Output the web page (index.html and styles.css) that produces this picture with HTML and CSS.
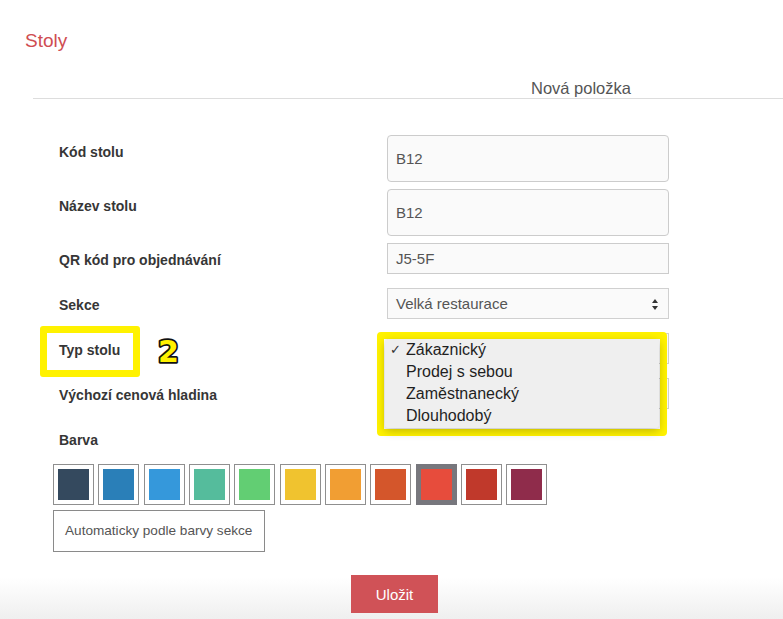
FILE: index.html
```html
<!DOCTYPE html>
<html lang="cs">
<head>
<meta charset="utf-8">
<title>Stoly</title>
<link rel="stylesheet" href="styles.css">
</head>
<body>
<div class="page">
  <header class="header"><h1 class="title">Stoly</h1></header>
  <div class="tabbar"><span class="tab">Nová položka</span></div>

  <form class="form">
    <div class="row">
      <div class="label">Kód stolu</div>
      <div class="field tall">B12</div>
    </div>
    <div class="row">
      <div class="label">Název stolu</div>
      <div class="field tall">B12</div>
    </div>
    <div class="row">
      <div class="label">QR kód pro objednávání</div>
      <div class="field">J5-5F</div>
    </div>
    <div class="row gap">
      <div class="label">Sekce</div>
      <div class="field select">Velká restaurace
        <svg class="arrows" width="6" height="11" viewBox="0 0 6 11"><path d="M3 0 L6 4 L0 4 Z M0 7 L6 7 L3 11 Z" fill="#333"/></svg>
      </div>
    </div>
    <div class="row gap">
      <div class="label">Typ stolu</div>
      <div class="field select"></div>
    </div>
    <div class="row gap">
      <div class="label">Výchozí cenová hladina</div>
      <div class="field select"></div>
    </div>
    <div class="row gap">
      <div class="label">Barva</div>
    </div>

    <div class="swatches">
      <span class="swatch"><span class="chip c1"></span></span>
      <span class="swatch"><span class="chip c2"></span></span>
      <span class="swatch"><span class="chip c3"></span></span>
      <span class="swatch"><span class="chip c4"></span></span>
      <span class="swatch"><span class="chip c5"></span></span>
      <span class="swatch"><span class="chip c6"></span></span>
      <span class="swatch"><span class="chip c7"></span></span>
      <span class="swatch"><span class="chip c8"></span></span>
      <span class="swatch selected"><span class="chip c9"></span></span>
      <span class="swatch"><span class="chip c10"></span></span>
      <span class="swatch"><span class="chip c11"></span></span>
    </div>
    <div class="auto">Automaticky podle barvy sekce</div>
  </form>

  <footer class="footer">
    <button class="save" type="button">Uložit</button>
  </footer>

  <div class="mark-label"></div>
  <svg class="mark-num" width="36" height="36" viewBox="0 0 36 36"><text x="5" y="28" class="num">2</text></svg>

  <div class="popup">
    <ul class="menu">
      <li class="opt"><span class="check">✓</span>Zákaznický</li>
      <li class="opt"><span class="check"></span>Prodej s sebou</li>
      <li class="opt"><span class="check"></span>Zaměstnanecký</li>
      <li class="opt"><span class="check"></span>Dlouhodobý</li>
    </ul>
  </div>
</div>
</body>
</html>
```

FILE: styles.css
```css
* { box-sizing: border-box; }
html, body { margin: 0; padding: 0; background: #fff; }
body { font-family: "Liberation Sans", Arial, sans-serif; }

.page { position: relative; width: 783px; height: 619px; overflow: hidden; }

.header { padding: 30px 0 0 25px; }
.title { margin: 0; font-size: 19px; line-height: 22px; font-weight: normal; color: #cf4d52; }

.tabbar { margin: 26px 0 0 33px; border-bottom: 1px solid #dddddd; }
.tab { display: block; margin-left: 498px; font-size: 16.5px; line-height: 20px; color: #555; }

.form { margin-top: 36px; padding-left: 59px; }
.row { display: flex; align-items: flex-start; margin-top: 7px; }
.row:first-child { margin-top: 0; }
.row.gap { margin-top: 14px; }
.label { width: 328px; padding-top: 7px; line-height: 20px; font-size: 14px; font-weight: bold; color: #363636; }

.field {
  position: relative;
  width: 282px; height: 31px;
  padding-left: 8px;
  border: 1px solid #cccccc;
  background: #fafafa;
  font-size: 15px; line-height: 29px; color: #555;
}
.field.tall { height: 47px; line-height: 45px; border-radius: 4px; }
.field.select { border-color: #d0d0d0; }
.arrows { position: absolute; right: 10px; top: 10px; }

.swatches { display: flex; gap: 4.33px; margin: 14px 0 0 -6px; }
.swatch { display: block; width: 41px; height: 41px; padding: 4px; border: 1px solid #8f8f8f; background: #fff; }
.swatch.selected { background: #77777d; border-color: #77777d; }
.chip { display: block; width: 31px; height: 31px; }
.c1 { background: #34495e; }
.c2 { background: #2a7fb8; }
.c3 { background: #3598db; }
.c4 { background: #55bc9c; }
.c5 { background: #62ce73; }
.c6 { background: #f0c32f; }
.c7 { background: #f19e33; }
.c8 { background: #d4562b; }
.c9 { background: #e74c3c; }
.c10 { background: #c0392b; }
.c11 { background: #8f2c4b; }

.auto {
  width: 212px; height: 42px; margin: 5px 0 0 -6px;
  padding-left: 11px;
  border: 1px solid #8a8a8a;
  font-size: 13.6px; line-height: 40px; color: #555;
  white-space: nowrap;
}

.footer {
  margin-top: 8px; height: 59px; padding-top: 15px;
  background: linear-gradient(to bottom, #ffffff 0%, #ffffff 30%, #efefef 100%);
}
.save {
  display: block; margin-left: 351px;
  width: 87px; height: 38px;
  border: 0; background: #d05257; color: #fff;
  font-family: "Liberation Sans", Arial, sans-serif; font-size: 15px;
}

.mark-label {
  position: absolute; left: 40px; top: 326px;
  width: 100px; height: 51px;
  border: 7px solid #fff200; border-radius: 3px;
}
.mark-num { position: absolute; left: 153px; top: 334px; }
.num {
  font-family: "DejaVu Sans", sans-serif; font-weight: bold; font-size: 30px;
  fill: #fff200; stroke: #111; stroke-width: 3.5px; paint-order: stroke fill;
  stroke-linejoin: round;
}

.popup {
  position: absolute; left: 377px; top: 332px;
  width: 290px; height: 104px;
  border: 7px solid #fff200; border-radius: 4px;
  padding: 0 1px 0 1px;
}
.menu {
  list-style: none; margin: 0; padding: 0 0 1px 5px;
  height: 89px;
  background: #efefef;
  border-radius: 3px;
  box-shadow: 0 3px 10px rgba(0,0,0,0.25);
}
.opt { display: flex; font-size: 16px; line-height: 22px; color: #1f1f1f; }
.check { width: 16px; font-family: "DejaVu Sans", sans-serif; font-size: 13px; color: #333; }
```
